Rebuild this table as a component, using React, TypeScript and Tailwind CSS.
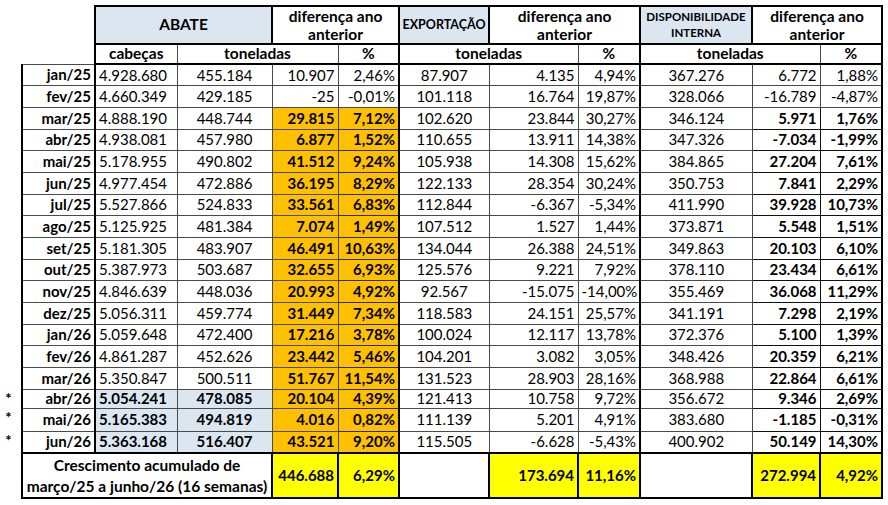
import React from 'react';

type Row = {
  m: string;
  star?: boolean;
  cab: string;
  ton: string;
  dif: string;
  pct: string;
  exp: string;
  expDif: string;
  expPct: string;
  disp: string;
  dispDif: string;
  dispPct: string;
};

const rows: Row[] = [
  { m: 'jan/25', cab: '4.928.680', ton: '455.184', dif: '10.907', pct: '2,46%', exp: '87.907', expDif: '4.135', expPct: '4,94%', disp: '367.276', dispDif: '6.772', dispPct: '1,88%' },
  { m: 'fev/25', cab: '4.660.349', ton: '429.185', dif: '-25', pct: '-0,01%', exp: '101.118', expDif: '16.764', expPct: '19,87%', disp: '328.066', dispDif: '-16.789', dispPct: '-4,87%' },
  { m: 'mar/25', cab: '4.888.190', ton: '448.744', dif: '29.815', pct: '7,12%', exp: '102.620', expDif: '23.844', expPct: '30,27%', disp: '346.124', dispDif: '5.971', dispPct: '1,76%' },
  { m: 'abr/25', cab: '4.938.081', ton: '457.980', dif: '6.877', pct: '1,52%', exp: '110.655', expDif: '13.911', expPct: '14,38%', disp: '347.326', dispDif: '-7.034', dispPct: '-1,99%' },
  { m: 'mai/25', cab: '5.178.955', ton: '490.802', dif: '41.512', pct: '9,24%', exp: '105.938', expDif: '14.308', expPct: '15,62%', disp: '384.865', dispDif: '27.204', dispPct: '7,61%' },
  { m: 'jun/25', cab: '4.977.454', ton: '472.886', dif: '36.195', pct: '8,29%', exp: '122.133', expDif: '28.354', expPct: '30,24%', disp: '350.753', dispDif: '7.841', dispPct: '2,29%' },
  { m: 'jul/25', cab: '5.527.866', ton: '524.833', dif: '33.561', pct: '6,83%', exp: '112.844', expDif: '-6.367', expPct: '-5,34%', disp: '411.990', dispDif: '39.928', dispPct: '10,73%' },
  { m: 'ago/25', cab: '5.125.925', ton: '481.384', dif: '7.074', pct: '1,49%', exp: '107.512', expDif: '1.527', expPct: '1,44%', disp: '373.871', dispDif: '5.548', dispPct: '1,51%' },
  { m: 'set/25', cab: '5.181.305', ton: '483.907', dif: '46.491', pct: '10,63%', exp: '134.044', expDif: '26.388', expPct: '24,51%', disp: '349.863', dispDif: '20.103', dispPct: '6,10%' },
  { m: 'out/25', cab: '5.387.973', ton: '503.687', dif: '32.655', pct: '6,93%', exp: '125.576', expDif: '9.221', expPct: '7,92%', disp: '378.110', dispDif: '23.434', dispPct: '6,61%' },
  { m: 'nov/25', cab: '4.846.639', ton: '448.036', dif: '20.993', pct: '4,92%', exp: '92.567', expDif: '-15.075', expPct: '-14,00%', disp: '355.469', dispDif: '36.068', dispPct: '11,29%' },
  { m: 'dez/25', cab: '5.056.311', ton: '459.774', dif: '31.449', pct: '7,34%', exp: '118.583', expDif: '24.151', expPct: '25,57%', disp: '341.191', dispDif: '7.298', dispPct: '2,19%' },
  { m: 'jan/26', cab: '5.059.648', ton: '472.400', dif: '17.216', pct: '3,78%', exp: '100.024', expDif: '12.117', expPct: '13,78%', disp: '372.376', dispDif: '5.100', dispPct: '1,39%' },
  { m: 'fev/26', cab: '4.861.287', ton: '452.626', dif: '23.442', pct: '5,46%', exp: '104.201', expDif: '3.082', expPct: '3,05%', disp: '348.426', dispDif: '20.359', dispPct: '6,21%' },
  { m: 'mar/26', cab: '5.350.847', ton: '500.511', dif: '51.767', pct: '11,54%', exp: '131.523', expDif: '28.903', expPct: '28,16%', disp: '368.988', dispDif: '22.864', dispPct: '6,61%' },
  { m: 'abr/26', star: true, cab: '5.054.241', ton: '478.085', dif: '20.104', pct: '4,39%', exp: '121.413', expDif: '10.758', expPct: '9,72%', disp: '356.672', dispDif: '9.346', dispPct: '2,69%' },
  { m: 'mai/26', star: true, cab: '5.165.383', ton: '494.819', dif: '4.016', pct: '0,82%', exp: '111.139', expDif: '5.201', expPct: '4,91%', disp: '383.680', dispDif: '-1.185', dispPct: '-0,31%' },
  { m: 'jun/26', star: true, cab: '5.363.168', ton: '516.407', dif: '43.521', pct: '9,20%', exp: '115.505', expDif: '-6.628', expPct: '-5,43%', disp: '400.902', dispDif: '50.149', dispPct: '14,30%' },
];

// alturas das linhas, como na planilha
const rowH = (i: number) => {
  if (i === 15) return 'h-[19px]';
  if (i === 16) return 'h-[23px]';
  if (i === 17) return 'h-[22px]';
  return i % 3 === 1 ? 'h-[22px]' : 'h-[21.5px]';
};

const td = 'border border-[#4a4a4a] px-[3px] py-0 leading-none whitespace-nowrap';
const diffHead = 'border-2 border-black border-l border-l-[#4a4a4a] align-top text-[15.5px] font-bold leading-[18px] p-0';

export default function App() {
  return (
    <div className="w-[888px] h-[505px] bg-white pt-[5px] text-black text-[15px] leading-none" style={{ fontFamily: 'Lato, "Liberation Sans", sans-serif' }}>
      <table className="table-fixed border-collapse w-[882px]">
        <colgroup>
          <col className="w-[22px]" />
          <col className="w-[73px]" />
          <col className="w-[82px]" />
          <col className="w-[95px]" />
          <col className="w-[66px]" />
          <col className="w-[61px]" />
          <col className="w-[90px]" />
          <col className="w-[89px]" />
          <col className="w-[62px]" />
          <col className="w-[112px]" />
          <col className="w-[68px]" />
          <col className="w-[62px]" />
        </colgroup>
        <thead>
          <tr className="h-[38px]">
            <th colSpan={2} className="p-0" />
            <th colSpan={2} className="border-2 border-black bg-[#dce6f1] text-[15.5px] font-bold p-0">ABATE</th>
            <th colSpan={2} className={diffHead}>
              diferença ano<br />anterior
            </th>
            <th className="border-2 border-black bg-[#dce6f1] text-[12.5px] font-bold p-0">EXPORTAÇÃO</th>
            <th colSpan={2} className={diffHead}>
              diferença ano<br />anterior
            </th>
            <th className="border-2 border-black bg-[#dce6f1] text-[11.5px] font-bold leading-[16px] p-0">
              DISPONIBILIDADE<br />INTERNA
            </th>
            <th colSpan={2} className={diffHead}>
              diferença ano<br />anterior
            </th>
          </tr>
          <tr className="h-[20px] text-[15.5px]">
            <th colSpan={2} className="p-0" />
            <th className="border-2 border-black border-r border-r-[#4a4a4a] font-bold p-0">cabeças</th>
            <th colSpan={2} className="border-2 border-black border-x border-x-[#4a4a4a] font-bold p-0">toneladas</th>
            <th className="border-2 border-black border-l border-l-[#4a4a4a] font-bold p-0">%</th>
            <th colSpan={2} className="border-2 border-black border-r border-r-[#4a4a4a] font-bold p-0">toneladas</th>
            <th className="border-2 border-black border-l border-l-[#4a4a4a] font-bold p-0">%</th>
            <th colSpan={2} className="border-2 border-black border-r border-r-[#4a4a4a] font-bold p-0">toneladas</th>
            <th className="border-2 border-black border-l border-l-[#4a4a4a] font-bold p-0">%</th>
          </tr>
        </thead>
        <tbody>
          {rows.map((r, i) => {
            const hi = i >= 2; // destaque a partir de mar/25
            const blue = r.star;
            return (
              <tr key={r.m} className={rowH(i)}>
                <td className="p-0 pr-[4px] text-center align-top pt-[2px] text-[15px] font-bold leading-none">{r.star ? '*' : ''}</td>
                <td className={`${td} border-l-2 border-l-black border-r-2 border-r-black text-right font-bold`}>{r.m}</td>
                <td className={`${td} text-left ${blue ? 'bg-[#dce6f1] font-bold' : ''}`}>{r.cab}</td>
                <td className={`${td} text-center ${blue ? 'bg-[#dce6f1] font-bold' : ''}`}>{r.ton}</td>
                <td className={`${td} text-right ${hi ? 'bg-[#ffc000] font-bold border-[#2a2a2a]' : ''}`}>{r.dif}</td>
                <td className={`${td} text-right border-r-2 border-r-black ${hi ? 'bg-[#ffc000] font-bold border-y-[#2a2a2a] border-l-[#2a2a2a]' : ''}`}>{r.pct}</td>
                <td className={`${td} text-center`}>{r.exp}</td>
                <td className={`${td} text-right`}>{r.expDif}</td>
                <td className={`${td} text-right border-r-2 border-r-black`}>{r.expPct}</td>
                <td className={`${td} text-center`}>{r.disp}</td>
                <td className={`${td} text-right ${hi ? 'font-bold border-[#111111]' : ''}`}>{r.dispDif}</td>
                <td className={`${td} text-right border-r-2 border-r-black ${hi ? 'font-bold border-y-[#111111]' : ''}`}>{r.dispPct}</td>
              </tr>
            );
          })}
          <tr className="h-[45px]">
            <td className="p-0" />
            <td colSpan={3} className="border-2 border-black text-center leading-[21px] p-0 text-[15.5px] font-bold">
              Crescimento acumulado de<br />março/25 a junho/26 (16 semanas)
            </td>
            <td className="border-2 border-black border-r border-r-[#1a1a1a] bg-[#ffff00] text-right px-[3px] font-bold">446.688</td>
            <td className="border-2 border-black bg-[#ffff00] text-right px-[3px] font-bold">6,29%</td>
            <td className="border-2 border-black border-r border-r-[#1a1a1a]" />
            <td className="border-2 border-black border-r border-r-[#1a1a1a] bg-[#ffff00] text-right px-[3px] font-bold">173.694</td>
            <td className="border-2 border-black bg-[#ffff00] text-right px-[3px] font-bold">11,16%</td>
            <td className="border-2 border-black border-r border-r-[#1a1a1a]" />
            <td className="border-2 border-black border-r border-r-[#1a1a1a] bg-[#ffff00] text-right px-[3px] font-bold">272.994</td>
            <td className="border-2 border-black bg-[#ffff00] text-right px-[3px] font-bold">4,92%</td>
          </tr>
        </tbody>
      </table>
    </div>
  );
}
